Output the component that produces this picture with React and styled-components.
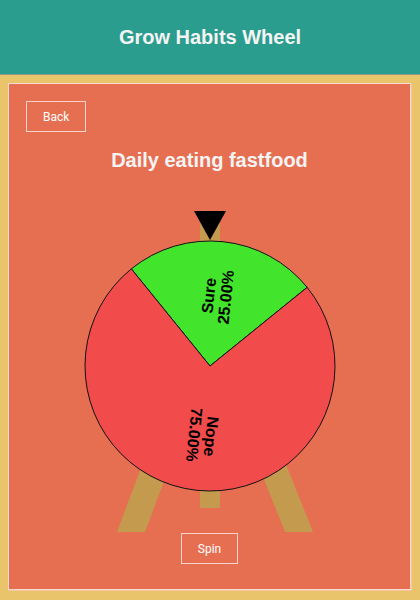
import React from 'react'
import styled, { createGlobalStyle } from 'styled-components'

const GlobalStyle = createGlobalStyle`
  html, body {
    margin: 0;
    padding: 0;
    background: #e9c46a;
    font-family: 'Liberation Sans', Arial, sans-serif;
  }
`

const Header = styled.header`
  height: 74px;
  background: #2a9d8f;
  border-bottom: 1px solid #8f9a8a;
  display: flex;
  align-items: center;
  justify-content: center;
  h1 {
    margin: 0;
    font-size: 20px;
    font-weight: bold;
    color: #f4f4f4;
  }
`

const Page = styled.main`
  padding: 8px 9px 10px 8px;
`

const Panel = styled.section`
  box-sizing: border-box;
  height: 507px;
  background: #e76f51;
  border: 1px solid rgba(255, 255, 255, 0.75);
  box-shadow: 1px 1px 0 rgba(255, 200, 190, 0.6);
  padding: 17px;
  display: flex;
  flex-direction: column;
  align-items: center;
`

const OutlineButton = styled.button`
  align-self: ${(p) => (p.$left ? 'flex-start' : 'center')};
  height: 31px;
  padding: 0 16px;
  background: transparent;
  border: 1px solid rgba(255, 255, 255, 0.7);
  color: #fff;
  font-family: Roboto, 'Liberation Sans', sans-serif;
  font-size: 12px;
  cursor: pointer;
`

const Title = styled.h2`
  margin: 16px 0 0;
  line-height: 24px;
  font-size: 20px;
  font-weight: bold;
  color: #f4f4f4;
`

const WheelArt = styled.svg`
  display: block;
  margin-top: 39px;
  overflow: visible;
`

const slices = [
  { label: 'Sure', pct: '25.00%', from: -39, to: 51, color: '#42e52b' },
  { label: 'Nope', pct: '75.00%', from: 51, to: 321, color: '#f24b4b' },
]

const cx = 130
const cy = 155
const R = 125

const pt = (deg, r = R) => {
  const a = (deg * Math.PI) / 180
  return [cx + r * Math.sin(a), cy - r * Math.cos(a)]
}

const Wheel = () => (
  <WheelArt width='260' height='322' viewBox='0 0 260 322'>
    <g fill='#c49a4e'>
      <rect x='120' y='0' width='20' height='297' />
      <polygon points='37,321 65,321 136,131 108,131' />
      <polygon points='205,321 233,321 157,131 129,131' />
    </g>
    {slices.map((s) => {
      const [x1, y1] = pt(s.from)
      const [x2, y2] = pt(s.to)
      const large = s.to - s.from > 180 ? 1 : 0
      const mid = (s.from + s.to) / 2
      const [tx, ty] = pt(mid, 70)
      return (
        <g key={s.label}>
          <path
            d={`M${cx} ${cy} L${x1} ${y1} A${R} ${R} 0 ${large} 1 ${x2} ${y2} Z`}
            fill={s.color}
            stroke='#111'
            strokeWidth='1'
          />
          <text
            transform={`translate(${tx} ${ty}) rotate(${mid - 90})`}
            textAnchor='middle'
            fontFamily="'Liberation Sans', Arial, sans-serif"
            fontWeight='bold'
            fontSize='16'
            fill='#000'
          >
            <tspan x='0' y='-3'>{s.label}</tspan>
            <tspan x='0' y='14'>{s.pct}</tspan>
          </text>
        </g>
      )
    })}
    <polygon points='114,0 146,0 130,29' fill='#000' />
  </WheelArt>
)

const App = () => (
  <>
    <GlobalStyle />
    <Header>
      <h1>Grow Habits Wheel</h1>
    </Header>
    <Page>
      <Panel>
        <OutlineButton $left>Back</OutlineButton>
        <Title>Daily eating fastfood</Title>
        <Wheel />
        <OutlineButton>Spin</OutlineButton>
      </Panel>
    </Page>
  </>
)

export default App
